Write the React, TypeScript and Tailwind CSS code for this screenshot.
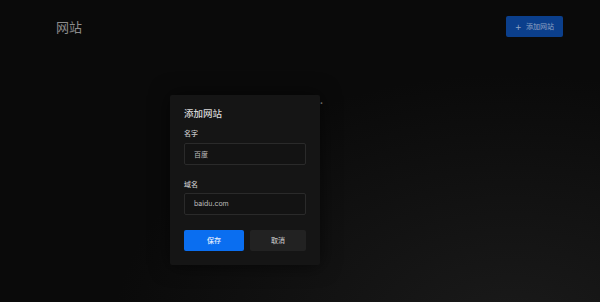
import React from 'react';

const font = { fontFamily: '"Noto Sans CJK SC", "Noto Sans", sans-serif' };

export default function App() {
  return (
    <div
      className="relative w-[600px] h-[302px] overflow-hidden bg-[#0a0a0a] text-white"
      style={font}
    >
      <div className="absolute inset-0 bg-[radial-gradient(ellipse_at_85%_110%,_rgba(40,40,40,0.55),_rgba(10,10,10,0)_55%)] pointer-events-none" />

      {/* Header */}
      <div className="relative flex items-center justify-between pl-[56px] pr-[37px] pt-[16px]">
        <h1 className="text-[13px] leading-[21px] text-[#8c8c8c]">网站</h1>
        <button className="flex items-center gap-[5px] h-[21px] px-[9px] rounded-[2px] bg-[#0b3f8c] text-[7px] text-[#8fa3c4]">
          <span className="text-[10px] leading-none">+</span>
          <span>添加网站</span>
        </button>
      </div>

      <div className="absolute left-[320px] top-[94px] text-[9px] font-bold text-[#888]">.</div>

      {/* Modal */}
      <div className="absolute left-[170px] top-[95px] w-[150px] h-[170px] bg-[#151515] rounded-[2px] shadow-[0_0_20px_rgba(0,0,0,0.6)] px-[14px] pt-[11px]">
        <div className="text-[9.5px] leading-[14px] font-medium text-[#d8d8d8]">添加网站</div>
        <div className="mt-[8px] text-[7px] leading-[10px] font-medium text-[#c4c4c4]">名字</div>
        <div className="mt-[5px] h-[22px] border border-[#2a2a2a] bg-[#131313] rounded-[2px] flex items-center px-[9px] text-[7px] text-[#bdbdbd]">
          百度
        </div>
        <div className="mt-[14px] text-[7px] leading-[10px] font-medium text-[#c4c4c4]">域名</div>
        <div className="mt-[4px] h-[22px] border border-[#2a2a2a] bg-[#131313] rounded-[2px] flex items-center px-[9px] text-[7px] text-[#bdbdbd]" style={{ fontFamily: 'Inter, "Noto Sans", sans-serif' }}>
          baidu.com
        </div>
        <div className="mt-[15px] flex gap-[6px]">
          <button className="w-[60px] h-[21px] rounded-[2px] bg-[#0a6ef0] text-[7px] font-medium text-[#e8eefc]">保存</button>
          <button className="w-[56px] h-[21px] rounded-[2px] bg-[#222222] text-[7px] font-medium text-[#bdbdbd]">取消</button>
        </div>
      </div>
    </div>
  );
}
